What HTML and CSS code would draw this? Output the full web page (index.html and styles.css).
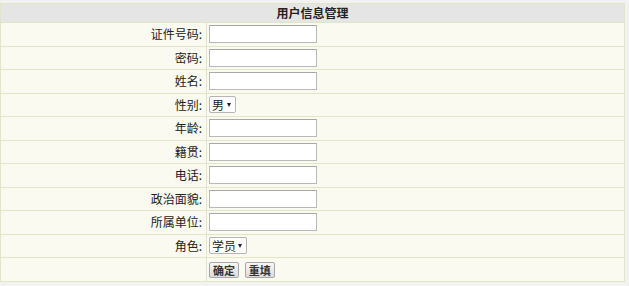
FILE: index.html
```html
<!DOCTYPE html>
<html>
<head>
    <meta charset="utf-8">
    <title>用户信息管理</title>
    <link rel="stylesheet" href="styles.css">
</head>
<body>
<form class="user-form">
    <table class="grid">
        <tr>
            <th class="head" colspan="2">用户信息管理</th>
        </tr>
        <tr>
            <td class="label">证件号码:</td>
            <td class="field"><input class="ipt" type="text"></td>
        </tr>
        <tr>
            <td class="label">密码:</td>
            <td class="field"><input class="ipt" type="password"></td>
        </tr>
        <tr>
            <td class="label">姓名:</td>
            <td class="field"><input class="ipt" type="text"></td>
        </tr>
        <tr>
            <td class="label">性别:</td>
            <td class="field">
                <span class="sel-wrap">
                    <select class="sel sel-sex" name="sex">
                        <option value="1">男</option>
                        <option value="0">女</option>
                    </select>
                </span>
            </td>
        </tr>
        <tr>
            <td class="label">年龄:</td>
            <td class="field"><input class="ipt" type="text"></td>
        </tr>
        <tr>
            <td class="label">籍贯:</td>
            <td class="field"><input class="ipt" type="text"></td>
        </tr>
        <tr>
            <td class="label">电话:</td>
            <td class="field"><input class="ipt" type="text"></td>
        </tr>
        <tr>
            <td class="label">政治面貌:</td>
            <td class="field"><input class="ipt" type="text"></td>
        </tr>
        <tr>
            <td class="label">所属单位:</td>
            <td class="field"><input class="ipt" type="text"></td>
        </tr>
        <tr>
            <td class="label">角色:</td>
            <td class="field">
                <span class="sel-wrap">
                    <select class="sel sel-role" name="role">
                        <option value="student">学员</option>
                        <option value="teacher">教员</option>
                    </select>
                </span>
            </td>
        </tr>
        <tr>
            <td class="label"></td>
            <td class="field">
                <input class="btn" type="submit" value="确定">
                <input class="btn" type="reset" value="重填">
            </td>
        </tr>
    </table>
</form>
</body>
</html>
```

FILE: styles.css
```css
body {
    margin: 0;
    padding-top: 3px;
    background-color: #f2f2f2;
    font-family: "Noto Sans CJK SC", "Liberation Sans", sans-serif;
    font-size: 12px;
    line-height: 14px;
    color: #222;
}

.grid {
    width: 625px;
    border-collapse: collapse;
    background-color: #fafaf0;
}

.grid th, .grid td {
    border: 1px solid #dfe7c6;
    padding: 0;
}

.head {
    height: 18px;
    background-color: #e5e5e5;
    font-weight: 700;
    text-align: center;
}

.grid .label {
    width: 201px;
    height: 22.5px;
    padding-right: 4px;
    text-align: right;
}

.grid .field {
    padding-left: 2px;
}

.ipt {
    display: block;
    width: 108px;
    height: 18px;
    margin: 0;
    box-sizing: border-box;
    border: 1px solid #b9b9b9;
    border-top-color: #a8a8a8;
    background-color: #fff;
}

.sel-wrap {
    position: relative;
    display: inline-block;
    vertical-align: middle;
}

/* small dropdown arrow drawn over the select */
.sel-wrap::after {
    content: "";
    position: absolute;
    right: 5px;
    top: 7px;
    width: 0;
    height: 0;
    border-left: 2.5px solid transparent;
    border-right: 2.5px solid transparent;
    border-top: 4px solid #222;
    pointer-events: none;
}

.sel {
    display: block;
    height: 17px;
    margin: 0;
    padding: 0 0 0 2px;
    box-sizing: border-box;
    border: 1px solid #b5b5b5;
    border-radius: 2px;
    background-color: #fff;
    font-family: "Noto Sans CJK SC", sans-serif;
    font-size: 12px;
    line-height: 14px;
    color: #222;
    -webkit-appearance: none;
    appearance: none;
}

.sel-sex {
    width: 27px;
}

.sel-role {
    width: 38px;
}

.btn {
    height: 16px;
    margin: 0 3px 0 0;
    padding: 0 3px;
    vertical-align: middle;
    border: 1px solid #a7a7a7;
    border-radius: 2px;
    background: linear-gradient(#f7f7f7, #dcdcdc);
    font-family: "Noto Sans CJK SC", sans-serif;
    font-size: 11px;
    font-weight: 700;
    line-height: 12px;
    color: #333;
}
```
